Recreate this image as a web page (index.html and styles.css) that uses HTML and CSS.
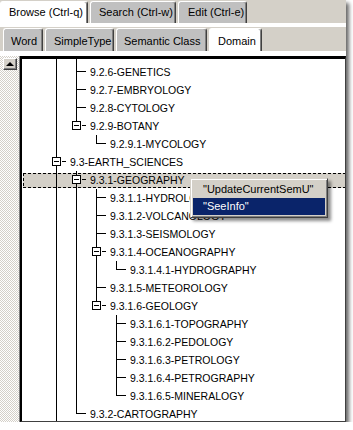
FILE: index.html
```html
<!DOCTYPE html>
<html lang="en">
<head>
  <meta charset="UTF-8" />
  <title>Browse - Domain</title>
  <link rel="stylesheet" href="styles.css">
</head>
<body>
  <div class="win">
    <!-- outer tabs -->
    <div class="tabs1">
      <div class="tab on w-browse">Browse (Ctrl-q)</div>
      <div class="tab w-search">Search (Ctrl-w)</div>
      <div class="tab w-edit">Edit (Ctrl-e)</div>
    </div>
    <div class="band1"></div>

    <!-- inner tabs -->
    <div class="tabs2">
      <div class="tab w-word">Word</div>
      <div class="tab w-simple">SimpleType</div>
      <div class="tab w-sem">Semantic Class</div>
      <div class="tab on w-dom">Domain</div>
    </div>
    <div class="band2"></div>

    <div class="main">
      <div class="vscroll">
        <div class="arrow-up"></div>
      </div>

      <div class="pane">
        <div class="tree">
          <div class="row gap"><i class="c v"></i><i class="c v"></i></div>
          <div class="row"><i class="c v"></i><i class="c t"></i><span class="lbl">9.2.6-GENETICS</span></div>
          <div class="row"><i class="c v"></i><i class="c t"></i><span class="lbl">9.2.7-EMBRYOLOGY</span></div>
          <div class="row"><i class="c v"></i><i class="c t"></i><span class="lbl">9.2.8-CYTOLOGY</span></div>
          <div class="row"><i class="c v"></i><i class="c bx up"><b></b></i><span class="lbl">9.2.9-BOTANY</span></div>
          <div class="row"><i class="c v"></i><i class="c"></i><i class="c l"></i><span class="lbl">9.2.9.1-MYCOLOGY</span></div>
          <div class="row"><i class="c bx up dn"><b></b></i><span class="lbl">9.3-EARTH_SCIENCES</span></div>
          <div class="row sel"><i class="c v"></i><i class="c bx up dn"><b></b></i><span class="lbl">9.3.1-GEOGRAPHY</span></div>
          <div class="row"><i class="c v"></i><i class="c v"></i><i class="c t"></i><span class="lbl">9.3.1.1-HYDROLOGY</span></div>
          <div class="row"><i class="c v"></i><i class="c v"></i><i class="c t"></i><span class="lbl">9.3.1.2-VOLCANOLOGY</span></div>
          <div class="row"><i class="c v"></i><i class="c v"></i><i class="c t"></i><span class="lbl">9.3.1.3-SEISMOLOGY</span></div>
          <div class="row"><i class="c v"></i><i class="c v"></i><i class="c bx up dn"><b></b></i><span class="lbl">9.3.1.4-OCEANOGRAPHY</span></div>
          <div class="row"><i class="c v"></i><i class="c v"></i><i class="c v"></i><i class="c l"></i><span class="lbl">9.3.1.4.1-HYDROGRAPHY</span></div>
          <div class="row"><i class="c v"></i><i class="c v"></i><i class="c t"></i><span class="lbl">9.3.1.5-METEOROLOGY</span></div>
          <div class="row"><i class="c v"></i><i class="c v"></i><i class="c bx up"><b></b></i><span class="lbl">9.3.1.6-GEOLOGY</span></div>
          <div class="row"><i class="c v"></i><i class="c v"></i><i class="c"></i><i class="c t"></i><span class="lbl">9.3.1.6.1-TOPOGRAPHY</span></div>
          <div class="row"><i class="c v"></i><i class="c v"></i><i class="c"></i><i class="c t"></i><span class="lbl">9.3.1.6.2-PEDOLOGY</span></div>
          <div class="row"><i class="c v"></i><i class="c v"></i><i class="c"></i><i class="c t"></i><span class="lbl">9.3.1.6.3-PETROLOGY</span></div>
          <div class="row"><i class="c v"></i><i class="c v"></i><i class="c"></i><i class="c t"></i><span class="lbl">9.3.1.6.4-PETROGRAPHY</span></div>
          <div class="row"><i class="c v"></i><i class="c v"></i><i class="c"></i><i class="c l"></i><span class="lbl">9.3.1.6.5-MINERALOGY</span></div>
          <div class="row"><i class="c v"></i><i class="c l"></i><span class="lbl">9.3.2-CARTOGRAPHY</span></div>
          <div class="row"><i class="c v"></i></div>
        </div>
      </div>
    </div>

    <!-- context menu -->
    <div class="menu">
      <div class="item">"UpdateCurrentSemU"</div>
      <div class="item hl">"SeeInfo"</div>
    </div>
  </div>
</body>
</html>
```

FILE: styles.css
```css
:root {
  --face: #d4d0c8;
  --tab: #c0c0c0;
  --dark: #404040;
  --shade: #808080;
  --navy: #0a246a;
}

body {
  margin: 0;
  background: #fff;
  font-family: 'Liberation Sans', Arial, sans-serif;
  color: #000;
}

.win {
  position: relative;
  width: 346px;
  height: 422px;
  display: flex;
  flex-direction: column;
  background: var(--face);
  box-shadow: 3px 3px 4px rgba(0, 0, 0, 0.6);
  overflow: visible;
}

/* Tabs */
.tabs1,
.tabs2 {
  display: flex;
  align-items: flex-end;
  gap: 2px;
  flex: none;
}

.tabs1 {
  height: 23px;
}

.tabs2 {
  height: 24px;
  padding-left: 3px;
}

.tab {
  box-sizing: border-box;
  height: 22px;
  padding: 0 0 0 8px;
  font-size: 11px;
  line-height: 21px;
  white-space: nowrap;
  background: var(--tab);
  border: 1px solid #fff;
  border-bottom: 0;
  border-right-color: var(--dark);
  border-radius: 3px 3px 0 0;
  box-shadow: inset -1px 0 var(--shade);
}

.tabs2 .tab {
  height: 23px;
  line-height: 24px;
}

.tab.on {
  background: #fff;
}

.w-browse { width: 88px; }
.w-search { width: 86px; }
.w-edit { width: 69px; padding-left: 9px; }
.w-word { width: 40px; padding-left: 7px; }
.w-simple { width: 69px; }
.w-sem { width: 91px; padding-left: 7px; }
.w-dom { width: 53px; padding-left: 8px; }

.band1 {
  height: 4px;
  background: #fff;
  flex: none;
}

.band2 {
  height: 5px;
  background: #fff;
  flex: none;
}

/* Tree area */
.main {
  flex: 1;
  display: flex;
  min-height: 0;
}

.vscroll {
  width: 20px;
  flex: none;
  box-sizing: border-box;
  padding: 2px 0 0 3px;
  background: repeating-conic-gradient(#fff 0 25%, var(--face) 0 50%) 0 0 / 2px 2px;
}

.arrow-up {
  width: 14px;
  height: 12px;
  box-sizing: border-box;
  background: var(--face);
  border: 1px solid;
  border-color: #fff var(--dark) var(--dark) #fff;
  box-shadow: inset -1px -1px var(--shade);
  display: flex;
  align-items: center;
  justify-content: center;
}

.arrow-up::after {
  content: '';
  border-left: 4px solid transparent;
  border-right: 4px solid transparent;
  border-bottom: 4px solid #000;
  margin: 0 1px 1px 0;
}

.pane {
  flex: 1;
  min-width: 0;
  background: #fff;
  border-top: 3px solid #000;
  border-left: 2px solid #000;
  border-right: 1px solid var(--dark);
  border-bottom: 1px solid var(--dark);
  box-shadow: -1px 0 var(--shade);
  overflow: hidden;
}

.tree {
  font-size: 10.5px;
}

.row {
  position: relative;
  display: flex;
  height: 18px;
  padding-left: 24px;
  white-space: nowrap;
}

.row.gap {
  height: 4px;
}

.lbl {
  margin-left: 4px;
  line-height: 18px;
}

/* tree lines */
.c {
  display: block;
  width: 20px;
  flex: none;
  background-repeat: no-repeat;
}

.v {
  background-image: linear-gradient(#000, #000);
  background-size: 1px 100%;
  background-position: 10px 0;
}

.t {
  background-image: linear-gradient(#000, #000), linear-gradient(#000, #000);
  background-size: 1px 100%, 10px 1px;
  background-position: 10px 0, 10px 8px;
}

.l {
  background-image: linear-gradient(#000, #000), linear-gradient(#000, #000);
  background-size: 1px 9px, 10px 1px;
  background-position: 10px 0, 10px 8px;
}

.bx {
  background-image: linear-gradient(#000, #000), linear-gradient(#000, #000);
  background-size: 4px 1px, 1px 4px;
  background-position: 16px 8px, 10px 0;
}

.bx.dn {
  background-image: linear-gradient(#000, #000), linear-gradient(#000, #000), linear-gradient(#000, #000);
  background-size: 4px 1px, 1px 4px, 1px 5px;
  background-position: 16px 8px, 10px 0, 10px 13px;
}

.bx b {
  display: block;
  width: 9px;
  height: 9px;
  margin: 4px 0 0 6px;
  box-sizing: border-box;
  border: 1px solid #000;
  background: linear-gradient(#000, #000) 1px 3px / 5px 1px no-repeat, #fff;
}

/* selected row */
.row.sel {
  z-index: 0;
}

.row.sel::before {
  content: '';
  position: absolute;
  left: 1px;
  right: 0;
  top: 2px;
  bottom: 1px;
  z-index: -1;
  background:
    repeating-linear-gradient(90deg, #000 0 3px, transparent 3px 5px) left top / 100% 1px no-repeat,
    repeating-linear-gradient(90deg, #000 0 3px, transparent 3px 5px) left bottom / 100% 1px no-repeat,
    repeating-linear-gradient(#000 0 3px, transparent 3px 5px) left top / 1px 100% no-repeat,
    var(--face);
}

/* context menu */
.menu {
  position: absolute;
  left: 190px;
  top: 178px;
  width: 138px;
  box-sizing: border-box;
  padding: 2px;
  background: var(--face);
  border: 1px solid;
  border-color: var(--face) var(--dark) var(--dark) var(--face);
  box-shadow: inset 1px 1px #fff, inset -1px -1px var(--shade), 3px 3px 3px rgba(0, 0, 0, 0.45);
  font-size: 11px;
}

.menu .item {
  height: 17px;
  line-height: 17px;
  padding-left: 10px;
  white-space: nowrap;
}

.menu .hl {
  background: var(--navy);
  color: #fff;
}
```
